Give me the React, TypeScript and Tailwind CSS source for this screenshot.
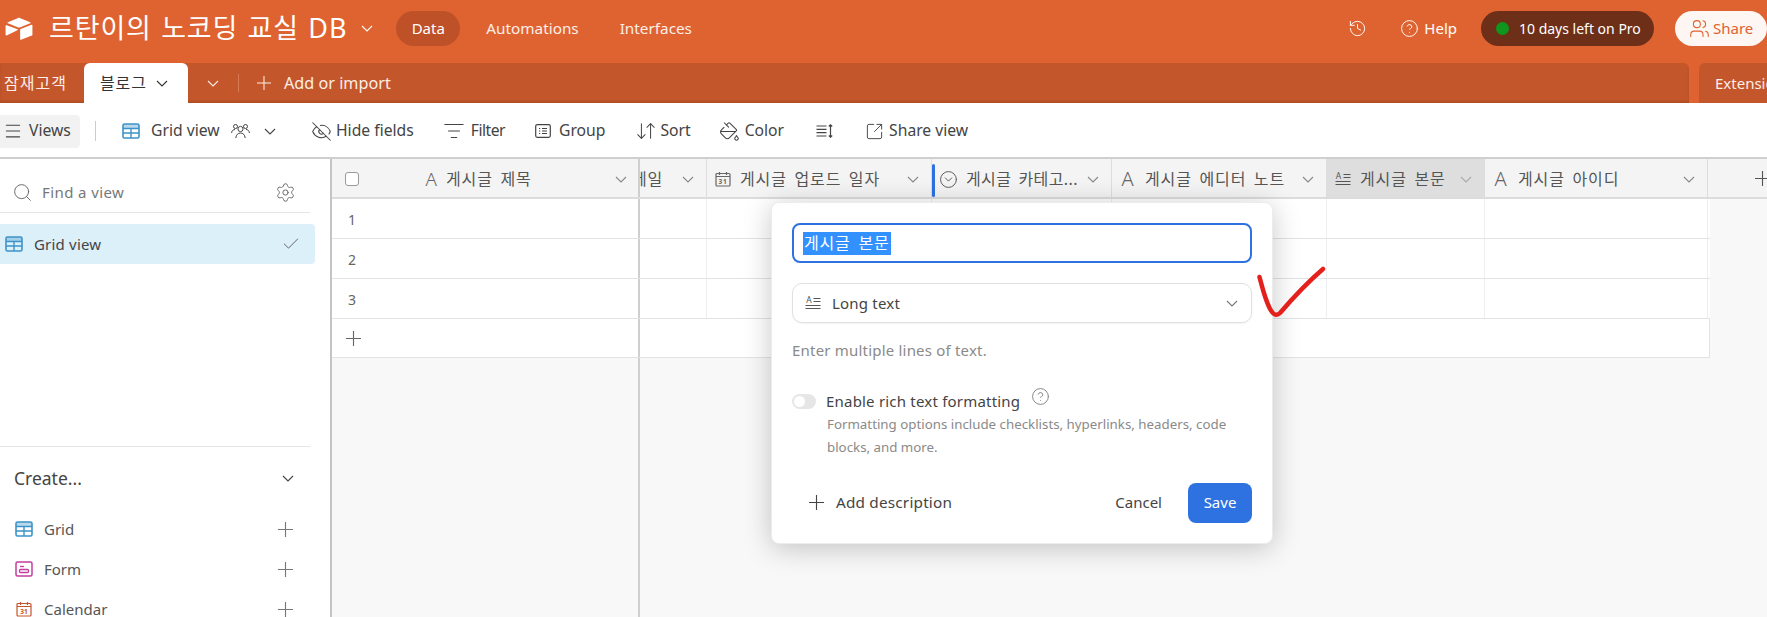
import { Check, CircleHelp, EyeOff, History, Menu, PaintBucket, Search, Settings, SquareArrowOutUpRight, ArrowDownUp, Users, ListFilter, CircleChevronDown } from "lucide-react";

const Chevron = ({ className = "" }: { className?: string }) => (
  <svg viewBox="0 0 12 7" className={`h-[7px] w-[12px] shrink-0 ${className}`} fill="none">
    <path d="M1 1l5 5 5-5" stroke="currentColor" strokeWidth="1.1" />
  </svg>
);

const Cross = ({ className = "" }: { className?: string }) => (
  <svg viewBox="0 0 16 16" className={`shrink-0 ${className}`} fill="none">
    <path d="M8 0v16M0 8h16" stroke="currentColor" strokeWidth="1.2" />
  </svg>
);

const GridIcon = ({ className = "" }: { className?: string }) => (
  <svg viewBox="0 0 18 16" className={className} fill="none">
    <rect x="1" y="1" width="16" height="14" rx="1.5" stroke="#3d93c9" strokeWidth="1.6" />
    <path d="M1 5.5h16M1 10h16M9 5.5V15" stroke="#3d93c9" strokeWidth="1.4" />
    <rect x="1" y="1" width="16" height="4.5" fill="#3d93c9" opacity="0.35" />
  </svg>
);

const FormIcon = ({ className = "" }: { className?: string }) => (
  <svg viewBox="0 0 18 16" className={className} fill="none">
    <rect x="1" y="1" width="16" height="14" rx="1.5" stroke="#c23d9e" strokeWidth="1.5" />
    <path d="M5 5.5h4" stroke="#c23d9e" strokeWidth="1.3" />
    <rect x="4.5" y="8.5" width="9" height="3" rx="1" stroke="#c23d9e" strokeWidth="1.3" />
  </svg>
);

const CalendarIcon = ({ color = "#666666", className = "" }: { color?: string; className?: string }) => (
  <svg viewBox="0 0 16 16" className={className} fill="none">
    <rect x="1" y="2.5" width="14" height="12.5" rx="1" stroke={color} strokeWidth="1.2" />
    <path d="M1 5.5h14M4.5 1v3M11.5 1v3" stroke={color} strokeWidth="1.2" />
    <text x="8" y="13" textAnchor="middle" fontSize="6.5" fontWeight="700" fill={color} fontFamily="Noto Sans">31</text>
  </svg>
);

const TextIcon = ({ className = "" }: { className?: string }) => (
  <svg viewBox="0 0 16 16" className={`overflow-visible ${className}`}>
    <text x="8" y="14.5" textAnchor="middle" fontSize="20" fontWeight="300" fill="#666666" fontFamily="Noto Sans">A</text>
  </svg>
);

const LongTextIcon = ({ className = "" }: { className?: string }) => (
  <svg viewBox="0 0 16 14" className={className} fill="none">
    <text x="4" y="7" textAnchor="middle" fontSize="8.5" fill="#555555" fontFamily="Noto Sans">A</text>
    <path d="M8.5 2.5h7M8.5 5.5h7M0.5 9.5h15M0.5 12.5h15" stroke="#555555" strokeWidth="1" />
  </svg>
);

const GroupIcon = () => (
  <svg viewBox="0 0 16 14" className="h-[14px] w-[16px]" fill="none">
    <rect x="0.7" y="0.7" width="14.6" height="12.6" rx="1.5" stroke="#444444" strokeWidth="1.2" />
    <path d="M4 4.5h1.2M7 4.5h5M4 7h1.2M7 7h5M4 9.5h1.2M7 9.5h5" stroke="#444444" strokeWidth="1.1" />
  </svg>
);

const RowHeightIcon = () => (
  <svg viewBox="0 0 17 14" className="h-[14px] w-[17px]" fill="none">
    <path d="M0.5 2h10M0.5 5.3h10M0.5 8.6h10M0.5 12h10M14.5 1v12M12.8 2.5l1.7-1.7 1.7 1.7M12.8 11.5l1.7 1.7 1.7-1.7" stroke="#444444" strokeWidth="1.2" />
  </svg>
);

const PeopleIcon = () => (
  <svg viewBox="0 0 19 16" className="ml-[10px] h-4 w-[19px]" fill="none" stroke="#444444" strokeWidth="1">
    <circle cx="9.5" cy="6" r="2.6" />
    <path d="M4.8 15c.4-3.4 2.2-5 4.7-5s4.300 1.600 4.700 5" />
    <circle cx="4.500" cy="3.500" r="2" />
    <path d="M.6 10c.2-2.300 1.600-3.500 3.400-3.500" />
    <circle cx="14.500" cy="3.500" r="2" />
    <path d="M18.400 10c-.2-2.300-1.600-3.500-3.400-3.500" />
  </svg>
);

const Logo = () => (
  <svg viewBox="0 0 28 24" className="h-[23px] w-[28px]">
    <path d="M12.6 1.2 2.4 5.4c-.6.2-.6 1 0 1.2l10.3 4.1c.9.4 1.9.4 2.7 0l10.3-4.1c.6-.2.6-1 0-1.2L15.4 1.2c-.9-.4-1.9-.4-2.8 0Z" fill="#ffffff" />
    <path d="M15.2 13.1v10c0 .5.5.8.9.6l11.4-4.4c.3-.1.5-.4.5-.6v-10c0-.5-.5-.8-.9-.6l-11.4 4.4c-.3.1-.5.4-.5.6Z" fill="#ffffff" />
    <path d="M12.6 13.6 9.2 15.3 1 19.2c-.5.2-1-.1-1-.6V9.2c0-.2.1-.3.2-.4l.3-.2c.2-.1.4-.1.6 0l11.5 4.3c.5.2.5.5 0 .7Z" fill="#ffffff" />
  </svg>
);

const columns = [
  { width: "w-[67px]", label: "메일", icon: null },
  { width: "w-[225px]", label: "게시글 업로드 일자", icon: <CalendarIcon className="h-4 w-4" /> },
  { width: "w-[180px]", label: "게시글 카테고...", icon: <CircleChevronDown className="-mx-[1px] h-[19px] w-[19px] text-[#555555]" strokeWidth={1.2} /> },
  { width: "w-[215px]", label: "게시글 에디터 노트", icon: <TextIcon className="h-4 w-4" /> },
  { width: "w-[158px]", label: "게시글 본문", icon: <LongTextIcon className="h-[14px] w-4" />, selected: true },
  { width: "w-[223px]", label: "게시글 아이디", icon: <TextIcon className="h-4 w-4" /> },
];

function Tabs() {
  return (
    <div className="flex h-10 overflow-hidden bg-[#df6330]">
      <div className="flex h-10 w-[1689px] shrink-0 items-center rounded-tr-md bg-[#c4562b] text-[#fbeee8] shadow-[inset_0_-2px_2px_rgba(120,50,20,0.25)]">
        <span className="ml-[4px] w-[80px] whitespace-nowrap text-[16px] tracking-[1px]">잠재고객</span>
        <div className="flex h-10 w-[104px] items-center rounded-t-md bg-white pl-4 text-[16px] tracking-[0.9px] text-[#333333]">
          블로그
          <Chevron className="ml-[9px]" />
        </div>
        <Chevron className="ml-[19px]" />
        <div className="ml-[19px] h-[18px] w-px bg-[#d97a55]" />
        <Cross className="ml-[18px] h-[14px] w-[14px]" />
        <span className="ml-[13px] text-[16.2px]">Add or import</span>
      </div>
      <div className="ml-[10px] flex h-10 w-[80px] shrink-0 items-center rounded-tl-md bg-[#c4562b] pl-4 text-[15px] text-[#fbeee8]">
        <span className="whitespace-nowrap">Extensions</span>
      </div>
    </div>
  );
}

function Toolbar() {
  return (
    <div className="flex h-[56px] items-center border-b-2 border-[#cfcfcf] bg-white pt-[2px] text-[15.7px] text-[#444444]">
      <div className="flex h-[33px] w-[80px] items-center rounded-r bg-[#f2f2f2] pl-[3px]">
        <Menu className="h-5 w-5" strokeWidth={1.3} />
        <span className="ml-[6px]">Views</span>
      </div>
      <div className="ml-[15px] h-5 w-px bg-[#cccccc]" />
      <GridIcon className="ml-[26px] h-4 w-[18px]" />
      <span className="ml-[11px] w-[70px] whitespace-nowrap">Grid view</span>
      <PeopleIcon />
      <Chevron className="ml-[14px]" />
      <EyeOff className="ml-[35px] h-[21px] w-[21px]" strokeWidth={1.2} />
      <span className="ml-[4px] whitespace-nowrap">Hide fields</span>
      <ListFilter className="ml-[29px] h-[22px] w-[22px]" strokeWidth={1.1} />
      <span className="ml-[6px] tracking-[-0.5px]">Filter</span>
      <div className="ml-[30px]"><GroupIcon /></div>
      <span className="ml-[8px]">Group</span>
      <ArrowDownUp className="ml-[30px] h-[22px] w-[22px]" strokeWidth={1.1} />
      <span className="ml-[3px]">Sort</span>
      <PaintBucket className="ml-[28px] h-[21px] w-[21px]" strokeWidth={1.2} />
      <span className="ml-[5px]">Color</span>
      <div className="ml-[32px]"><RowHeightIcon /></div>
      <SquareArrowOutUpRight className="ml-[32px] h-[19px] w-[19px]" strokeWidth={1.2} />
      <span className="ml-[5px] whitespace-nowrap">Share view</span>
    </div>
  );
}

function Sidebar() {
  return (
    <aside className="flex h-full w-[332px] shrink-0 flex-col overflow-hidden border-r-2 border-[#c4c4c4] bg-white text-[#444444]">
      <div className="flex h-[54px] w-[310px] shrink-0 items-center border-b border-[#e5e5e5] pl-[12px] pt-[13px]">
        <Search className="h-[21px] w-[21px] text-[#666666]" strokeWidth={1.1} />
        <span className="ml-[9px] text-[15px] tracking-[0.4px] text-[#777777]">Find a view</span>
        <Settings className="ml-auto mr-[14px] h-[21px] w-[21px] text-[#666666]" strokeWidth={1.1} />
      </div>
      <div className="mt-[11px] flex h-10 w-[315px] shrink-0 items-center rounded-r bg-[#dcf0fa] pl-[5px]">
        <GridIcon className="h-4 w-[18px]" />
        <span className="ml-[11px] text-[15px] tracking-[0.2px]">Grid view</span>
        <Check className="ml-auto mr-[14px] h-5 w-5 text-[#555555]" strokeWidth={1.1} />
      </div>
      <div className="mt-[182px] w-[310px] shrink-0 border-t border-[#e5e5e5]" />
      <div className="flex h-[62px] shrink-0 items-center pl-[14px] text-[17.5px]">
        Create...
        <Chevron className="ml-auto mr-[36px]" />
      </div>
      {[
        { label: "Grid", icon: <GridIcon className="h-4 w-[18px]" /> },
        { label: "Form", icon: <FormIcon className="h-4 w-[18px]" /> },
        { label: "Calendar", icon: <CalendarIcon color="#c4562b" className="h-4 w-[18px]" /> },
      ].map((item) => (
        <div key={item.label} className="flex h-10 shrink-0 items-center pl-[15px] text-[15px] text-[#555555]">
          {item.icon}
          <span className="ml-[11px]">{item.label}</span>
          <Cross className="ml-auto mr-[37px] h-[15px] w-[15px] text-[#777777]" />
        </div>
      ))}
    </aside>
  );
}

function Row({ label }: { label: string }) {
  return (
    <div className="flex h-10 border-b border-[#e2e3e6] bg-white">
      <div className="flex w-[306px] items-center pl-[16px] pt-[2px] text-[14px] text-[#666666]">{label}</div>
      <div className="w-[2px] bg-[#cfcfcf]" />
      {columns.map((col) => (
        <div key={col.label} className={`${col.width} border-r border-[#eeeeee]`} />
      ))}
    </div>
  );
}

function GridTable() {
  return (
    <div className="flex h-full flex-1 flex-col overflow-hidden bg-[#f8f8f8]">
      <div className="flex h-10 w-[1435px] shrink-0 border-b-2 border-[#dcdcdc] bg-[#f4f4f4] text-[16px] tracking-[0.9px] text-[#555555] [word-spacing:2.5px]">
        <div className="flex w-[306px] items-center pt-[2px]">
          <div className="ml-[13px] h-[14px] w-[14px] rounded-[3px] border border-[#999999] bg-white" />
          <TextIcon className="ml-[65px] h-[15px] w-[15px]" />
          <span className="ml-[7px] whitespace-nowrap">게시글 제목</span>
          <Chevron className="ml-auto mr-[11px] text-[#888888]" />
        </div>
        <div className="w-[2px] bg-[#cfcfcf]" />
        {columns.map((col) => {
          const isCategory = col.label.includes("카테고");
          return (
            <div
              key={col.label}
              className={`relative flex ${col.width} items-center overflow-hidden border-r border-[#dddddd] pt-[2px] ${col.selected ? "bg-[#dedede]" : ""} ${col.icon ? "pl-[8px]" : ""}`}
            >
              {col.icon}
              <span className={`${col.icon ? "ml-[9px]" : "-ml-[8px]"} whitespace-nowrap ${isCategory ? "tracking-[0.4px]" : ""}`}>{col.label}</span>
              <Chevron className={`ml-auto mr-[12px] ${col.selected ? "text-[#aaaaaa]" : "text-[#888888]"}`} />
              {isCategory && <div className="absolute left-0 top-[5px] h-[33px] w-[3px] rounded-sm bg-[#2d72e0]" />}
            </div>
          );
        })}
        <div className="flex w-[59px] items-center pl-[47px]">
          <Cross className="h-[15px] w-[15px] text-[#555555]" />
        </div>
      </div>
      <div className="w-[1378px]">
        <Row label="1" />
        <Row label="2" />
        <Row label="3" />
        <div className="flex h-[39px] border-b border-r border-[#e2e3e6] bg-white">
          <div className="flex w-[306px] items-center pl-[14px]">
            <Cross className="h-[15px] w-[15px] text-[#666666]" />
          </div>
          <div className="w-[2px] bg-[#cfcfcf]" />
        </div>
      </div>
      <div className="flex flex-1">
        <div className="ml-[306px] w-[2px] bg-[#cfcfcf]" />
      </div>
    </div>
  );
}

function FieldDialog() {
  return (
    <div className="absolute left-[771px] top-[202px] flex h-[342px] w-[502px] flex-col rounded-lg border border-[#ececec] bg-white px-[20px] pt-[20px] text-[#444444] shadow-[0_4px_28px_rgba(0,0,0,0.22)]">
      <div className="flex h-10 items-center rounded-lg border-2 border-[#2d72e0] pl-[9px]">
        <span className="bg-[#3390ff] px-px py-[1px] text-[16px] leading-[21px] tracking-[0.8px] text-white [word-spacing:3px]">게시글 본문</span>
      </div>
      <div className="mt-5 flex h-10 items-center rounded-[10px] border border-[#e0e0e0] pl-[12px] shadow-[0_1px_2px_rgba(0,0,0,0.05)]">
        <LongTextIcon className="h-[14px] w-4" />
        <span className="ml-[11px] text-[15px] tracking-[0.2px]">Long text</span>
        <Chevron className="ml-auto mr-[13px] text-[#777777]" />
      </div>
      <p className="mt-[17px] text-[15px] leading-5 tracking-[0.2px] text-[#8a8a8a]">Enter multiple lines of text.</p>
      <div className="mt-[30px] flex items-center">
        <div className="flex h-[15px] w-6 items-center rounded-full bg-[#e6e6e6] pl-[2px]">
          <div className="h-[11px] w-[11px] rounded-full bg-white" />
        </div>
        <span className="ml-[10px] text-[15px] tracking-[0.2px]">Enable rich text formatting</span>
        <CircleHelp className="-mt-[10px] ml-[11px] h-[19px] w-[19px] text-[#777777]" strokeWidth={1.1} />
      </div>
      <p className="ml-[35px] mt-0 text-[13.3px] leading-[23px] text-[#8a8a8a]">
        Formatting options include checklists, hyperlinks, headers, code blocks, and more.
      </p>
      <div className="mt-[24px] flex items-center">
        <Cross className="ml-[17px] h-[15px] w-[15px]" />
        <span className="ml-[12px] text-[15.3px] tracking-[0.2px]">Add description</span>
        <span className="ml-auto text-[15px]">Cancel</span>
        <button className="ml-[26px] h-10 w-[64px] rounded-lg bg-[#2d72e0] text-[15px] text-white">Save</button>
      </div>
    </div>
  );
}

export default function App() {
  return (
    <div className="relative h-[617px] w-[1767px] overflow-hidden bg-white font-['Noto_Sans','Noto_Sans_CJK_KR',sans-serif]">
      <header className="flex h-[63px] items-center bg-[#df6330] pb-[6px] text-white">
        <div className="ml-[5px]"><Logo /></div>
        <span className="ml-[16px] whitespace-nowrap text-[27px] tracking-[0.85px] [word-spacing:1.5px]">르탄이의 노코딩 교실 DB</span>
        <Chevron className="ml-[14px]" />
        <div className="ml-[23px] flex h-[35px] w-[64px] items-center justify-center rounded-full bg-[#bf5128] text-[15px]">Data</div>
        <span className="ml-[26px] text-[15.3px] text-[#fdeee8]">Automations</span>
        <span className="ml-[41px] text-[15.3px] text-[#fdeee8]">Interfaces</span>
        <History className="ml-auto h-[19px] w-[19px]" strokeWidth={1.2} />
        <CircleHelp className="ml-[33px] h-[19px] w-[19px]" strokeWidth={1.2} />
        <span className="ml-[5px] text-[15px]">Help</span>
        <div className="ml-[24px] flex h-[35px] w-[173px] items-center rounded-full bg-[#6e2f18] pl-[15px] text-[14px]">
          <div className="h-[13px] w-[13px] rounded-full bg-[#0f961e]" />
          <span className="ml-[10px] whitespace-nowrap">10 days left on Pro</span>
        </div>
        <div className="ml-[21px] flex h-[35px] w-[92px] items-center rounded-full bg-[#fdf6f3] pl-[14px] text-[15px] text-[#df6330]">
          <Users className="h-[21px] w-[21px]" strokeWidth={1.2} />
          <span className="ml-[3px]">Share</span>
        </div>
      </header>
      <Tabs />
      <Toolbar />
      <div className="flex h-[458px]">
        <Sidebar />
        <GridTable />
      </div>
      <FieldDialog />
      <svg viewBox="0 0 70 52" className="absolute left-[1257px] top-[266px] h-[52px] w-[70px]" fill="none">
        <path d="M2.5 11C5 20 9 38 15 46c3 4 6 3 8 1C35 33 52 15 66 3" stroke="#e3201b" strokeWidth="4.5" strokeLinecap="round" strokeLinejoin="round" />
      </svg>
    </div>
  );
}
